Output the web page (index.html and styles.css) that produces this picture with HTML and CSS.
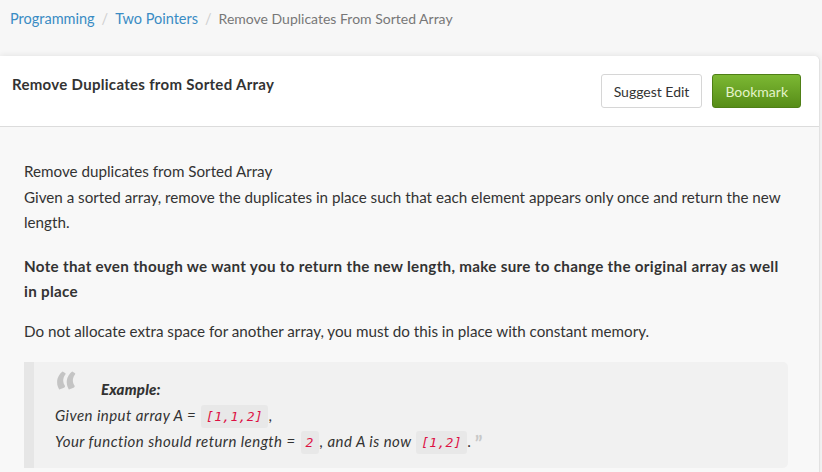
FILE: index.html
```html
<!DOCTYPE html>
<html>
<head>
<meta charset="utf-8">
<link rel="stylesheet" href="styles.css">
</head>
<body>
<nav class="breadcrumb">
  <a href="#" class="crumb-link">Programming</a>
  <span class="crumb-sep">/</span>
  <a href="#" class="crumb-link">Two Pointers</a>
  <span class="crumb-sep">/</span>
  <span class="crumb-active">Remove Duplicates From Sorted Array</span>
</nav>
<section class="card">
  <header class="card-header">
    <h1 class="card-title">Remove Duplicates from Sorted Array</h1>
    <div class="actions">
      <button class="btn btn-default">Suggest Edit</button>
      <button class="btn btn-green">Bookmark</button>
    </div>
  </header>
  <div class="card-body">
    <p class="para">Remove duplicates from Sorted Array<br>Given a sorted array, remove the duplicates in place such that each element appears only once and return the new length.</p>
    <p class="para strong">Note that even though we want you to return the new length, make sure to change the original array as well in place</p>
    <p class="para">Do not allocate extra space for another array, you must do this in place with constant memory.</p>
    <blockquote class="quote">
      <span class="quote-open">&ldquo;</span><strong class="quote-title">Example:</strong><br>
      Given input array A = <code class="code">[1,1,2]</code>,<br>
      Your function should return length = <code class="code">2</code>, and A is now <code class="code">[1,2]</code>.<span class="quote-close">&rdquo;</span>
    </blockquote>
  </div>
</section>
</body>
</html>
```

FILE: styles.css
```css
html, body {
  margin: 0;
  padding: 0;
}
body {
  background: #f7f7f7;
  font-family: Lato, "Noto Sans", sans-serif;
  color: #333;
  overflow: hidden;
}
.breadcrumb {
  display: flex;
  align-items: center;
  gap: 7px;
  height: 36px;
  padding: 0 10px;
  font-size: 14.5px;
}
.crumb-link {
  color: #3a8cc4;
  text-decoration: none;
}
.crumb-sep {
  color: #cfcfcf;
}
.crumb-active {
  color: #777;
  font-size: 14px;
}
.card {
  margin-top: 20px;
  margin-right: 2px;
  background: #f8f8f8;
  border-radius: 0 5px 0 0;
  border-right: 1px solid #e2e2e2;
  box-shadow: 0 -1px 6px rgba(0, 0, 0, 0.08);
  min-height: 420px;
}
.card-header {
  display: flex;
  justify-content: space-between;
  align-items: flex-start;
  background: #fff;
  border-radius: 0 5px 0 0;
  border-bottom: 1px solid #dcdcdc;
  padding: 18px 18px 18px 12px;
  height: 34px;
}
.card-title {
  margin: 0;
  font-size: 15px;
  font-weight: 700;
  letter-spacing: 0.3px;
  line-height: 20px;
  color: #333;
}
.actions {
  display: flex;
  gap: 10px;
}
.btn {
  height: 34px;
  padding: 0 12px;
  font-family: inherit;
  font-size: 14px;
  border-radius: 3px;
  cursor: pointer;
}
.btn-default {
  background: #fff;
  border: 1px solid #d6d6d6;
  color: #333;
}
.btn-green {
  background: linear-gradient(#7cb833, #578d18);
  border: 1px solid #4f7f16;
  color: #e4f3c9;
}
.card-body {
  padding: 32px 31px 20px 24px;
}
.para {
  margin: 0 0 18px;
  font-size: 15.2px;
  line-height: 25.5px;
}
.strong {
  font-weight: 700;
  letter-spacing: 0.3px;
  margin-bottom: 14px;
}
.quote {
  margin: 0;
  background: #f1f1f1;
  border-left: 10px solid #e6e6e6;
  border-radius: 0 5px 5px 0;
  padding: 14px 20px 14px 21px;
  font-style: italic;
  font-size: 15px;
  letter-spacing: 0.45px;
  line-height: 26px;
}
.quote-open {
  display: inline-block;
  width: 46px;
  font-size: 56px;
  font-style: normal;
  font-weight: 900;
  color: #c4c4c4;
  line-height: 0;
  vertical-align: -20px;
  letter-spacing: 0;
}
.quote-title {
  font-weight: 900;
  letter-spacing: 0.2px;
}
.quote-close {
  color: #c8c8c8;
  font-style: normal;
  font-weight: 700;
  font-size: 20px;
  line-height: 1;
  margin-left: 3px;
  vertical-align: -4px;
}
.code {
  font-family: "DejaVu Sans Mono", monospace;
  font-size: 13px;
  line-height: 1;
  letter-spacing: 0.3px;
  color: #dd1144;
  background: #e8e8e8;
  border-radius: 3px;
  padding: 4px 5px;
  margin: 0 1px;
}
```
